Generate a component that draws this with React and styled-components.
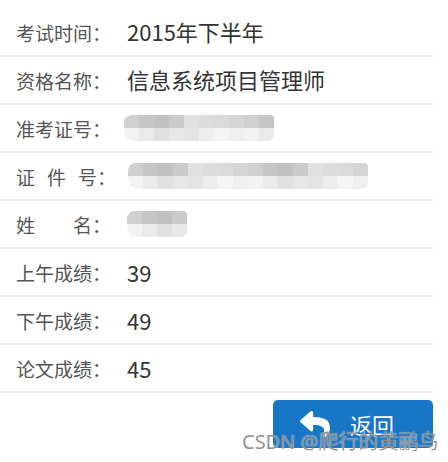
import React from "react";
import styled, { createGlobalStyle } from "styled-components";
import { FaReply } from "react-icons/fa";

const Global = createGlobalStyle`
  html, body { margin: 0; padding: 0; background: #fff; }
  body { font-family: "Noto Sans CJK SC", "Noto Sans", sans-serif; }
`;

const Page = styled.div`
  position: relative;
  width: 448px;
  height: 462px;
  padding-top: 9px;
  box-sizing: border-box;
  overflow: hidden;
`;

const List = styled.div`
  width: 433px;
  display: flex;
  flex-direction: column;
`;

const Row = styled.div`
  height: 46px;
  display: flex;
  align-items: center;
  padding-left: 16px;
  border-bottom: 2px solid #ebebeb;
`;

const Label = styled.div`
  width: 111px;
  flex: none;
  font-size: 19px;
  color: #555;
  white-space: nowrap;
  line-height: 1;
`;

const Spread = styled.span`
  letter-spacing: ${(p) => p.$gap}px;
`;

const Value = styled.div`
  font-size: 22px;
  color: #333;
  line-height: 1;
  padding-bottom: ${(p) => (p.$nudge ? 2 : 0)}px;
`;

const Mosaic = styled.div`
  display: grid;
  grid-template-columns: repeat(${(p) => p.$cols}, 15px);
  grid-auto-rows: 13px;
  margin-left: ${(p) => p.$shift || 0}px;
  border-radius: 8px 4px 6px 10px;
  overflow: hidden;
  filter: blur(0.6px);
`;

const Cell = styled.div`
  background: ${(p) => p.$c};
`;

const Footer = styled.div`
  width: 433px;
  display: flex;
  justify-content: flex-end;
  margin-top: 7px;
`;

const BackButton = styled.button`
  width: 160px;
  height: 48px;
  border: none;
  border-radius: 5px;
  background: #1776c6;
  color: #fff;
  display: flex;
  align-items: center;
  justify-content: center;
  gap: 20px;
  padding: 0 12px 0 0;
  font-family: "Noto Sans CJK SC", sans-serif;
  font-size: 22px;
  cursor: pointer;
`;

const Watermark = styled.div`
  position: absolute;
  left: 242px;
  top: 426px;
  font-family: "Noto Sans", "Noto Sans CJK SC", sans-serif;
  font-size: 20px;
  color: rgba(125, 125, 125, 0.85);
  white-space: nowrap;
  text-shadow: 0 0 1px rgba(255, 255, 255, 0.9);
  pointer-events: none;
`;

const palette = ["#d0d0d0", "#cbcbcb", "#dadada", "#c6c6c6", "#e0e0e0", "#d5d5d5", "#c1c1c1", "#dcdcdc"];
const palette2 = ["#ededed", "#f2f2f2", "#e7e7e7", "#f4f4f4", "#eaeaea", "#e4e4e4", "#efefef", "#e0e0e0"];

function Blur({ cols, shift }) {
  const cells = [];
  for (let r = 0; r < 2; r++) {
    for (let c = 0; c < cols; c++) {
      const pal = r === 0 ? palette : palette2;
      cells.push(<Cell key={r + "-" + c} $c={pal[(c * 3 + r) % pal.length]} />);
    }
  }
  return (
    <Mosaic $cols={cols} $shift={shift}>
      {cells}
    </Mosaic>
  );
}

export default function App() {
  return (
    <Page>
      <Global />
      <List>
        <Row>
          <Label>考试时间：</Label>
          <Value $nudge>2015年下半年</Value>
        </Row>
        <Row>
          <Label>资格名称：</Label>
          <Value $nudge>信息系统项目管理师</Value>
        </Row>
        <Row>
          <Label>准考证号：</Label>
          <Blur cols={10} shift={-3} />
        </Row>
        <Row>
          <Label>
            <Spread $gap={12}>证件</Spread>号：
          </Label>
          <Blur cols={16} shift={1} />
        </Row>
        <Row>
          <Label>
            <Spread $gap={38}>姓</Spread>名：
          </Label>
          <Blur cols={4} shift={0} />
        </Row>
        <Row>
          <Label>上午成绩：</Label>
          <Value>39</Value>
        </Row>
        <Row>
          <Label>下午成绩：</Label>
          <Value>49</Value>
        </Row>
        <Row>
          <Label>论文成绩：</Label>
          <Value>45</Value>
        </Row>
      </List>
      <Footer>
        <BackButton>
          <FaReply size={30} />
          <span>返回</span>
        </BackButton>
      </Footer>
      <Watermark>CSDN @爬行的黄鹂鸟</Watermark>
    </Page>
  );
}
